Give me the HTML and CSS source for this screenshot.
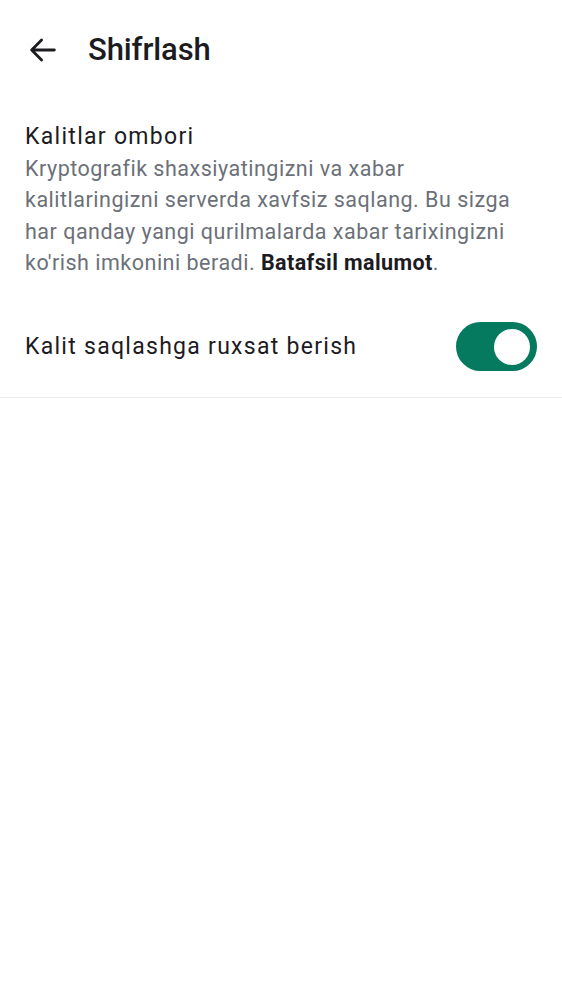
FILE: index.html
```html
<!DOCTYPE html>
<html lang="uz">
<head>
<meta charset="utf-8">
<title>Shifrlash</title>
<link rel="stylesheet" href="styles.css">
</head>
<body>
<header class="appbar">
  <button class="back" aria-label="Orqaga">
    <svg viewBox="0 0 24 24" width="34" height="34" fill="none" stroke="#1c1b1f" stroke-width="2" stroke-linecap="round" stroke-linejoin="round"><path d="M20 12H4.5M11 5l-7 7 7 7"/></svg>
  </button>
  <h1 class="title">Shifrlash</h1>
</header>
<section class="info">
  <h2 class="info-title">Kalitlar ombori</h2>
  <p class="info-text">Kryptografik shaxsiyatingizni va xabar kalitlaringizni serverda xavfsiz saqlang. Bu sizga har qanday yangi qurilmalarda xabar tarixingizni ko'rish imkonini beradi. <b class="link">Batafsil malumot</b>.</p>
</section>
<div class="row">
  <span class="row-label">Kalit saqlashga ruxsat berish</span>
  <span class="switch on"><span class="thumb"></span></span>
</div>
</body>
</html>
```
FILE: styles.css
```css
* { box-sizing: border-box; }
html, body { margin: 0; padding: 0; background: #fff; }
body {
  font-family: Roboto, "Noto Sans", sans-serif;
  color: #1c1b1f;
  width: 562px;
}
.appbar {
  height: 100px;
  display: flex;
  align-items: center;
  padding-left: 26px;
}
.back {
  width: 34px;
  height: 34px;
  padding: 0;
  border: 0;
  background: none;
  display: flex;
}
.title {
  margin: 0 0 0 28px;
  font-size: 31px;
  font-weight: 500;
  line-height: 36px;
  letter-spacing: -0.1px;
}
.info {
  padding: 21px 25px 0 25px;
}
.info-title {
  margin: 0;
  font-size: 23px;
  font-weight: 400;
  line-height: 32px;
  letter-spacing: 1.3px;
}
.info-text {
  margin: 0;
  font-size: 21.5px;
  line-height: 31.4px;
  color: #6b7079;
  letter-spacing: 0.5px;
}
.link { color: #1c1b1f; font-weight: 700; letter-spacing: 0.4px; }
.row {
  margin-top: 18px;
  height: 101px;
  display: flex;
  align-items: center;
  justify-content: space-between;
  padding: 0 25px;
  border-bottom: 1px solid #ececec;
}
.row-label {
  font-size: 23px;
  letter-spacing: 1.28px;
}
.switch {
  width: 81px;
  height: 49px;
  border-radius: 25px;
  background: #067a5f;
  display: flex;
  align-items: center;
  justify-content: flex-end;
  padding-right: 7px;
}
.thumb {
  width: 36px;
  height: 36px;
  border-radius: 50%;
  background: #fff;
}
```
